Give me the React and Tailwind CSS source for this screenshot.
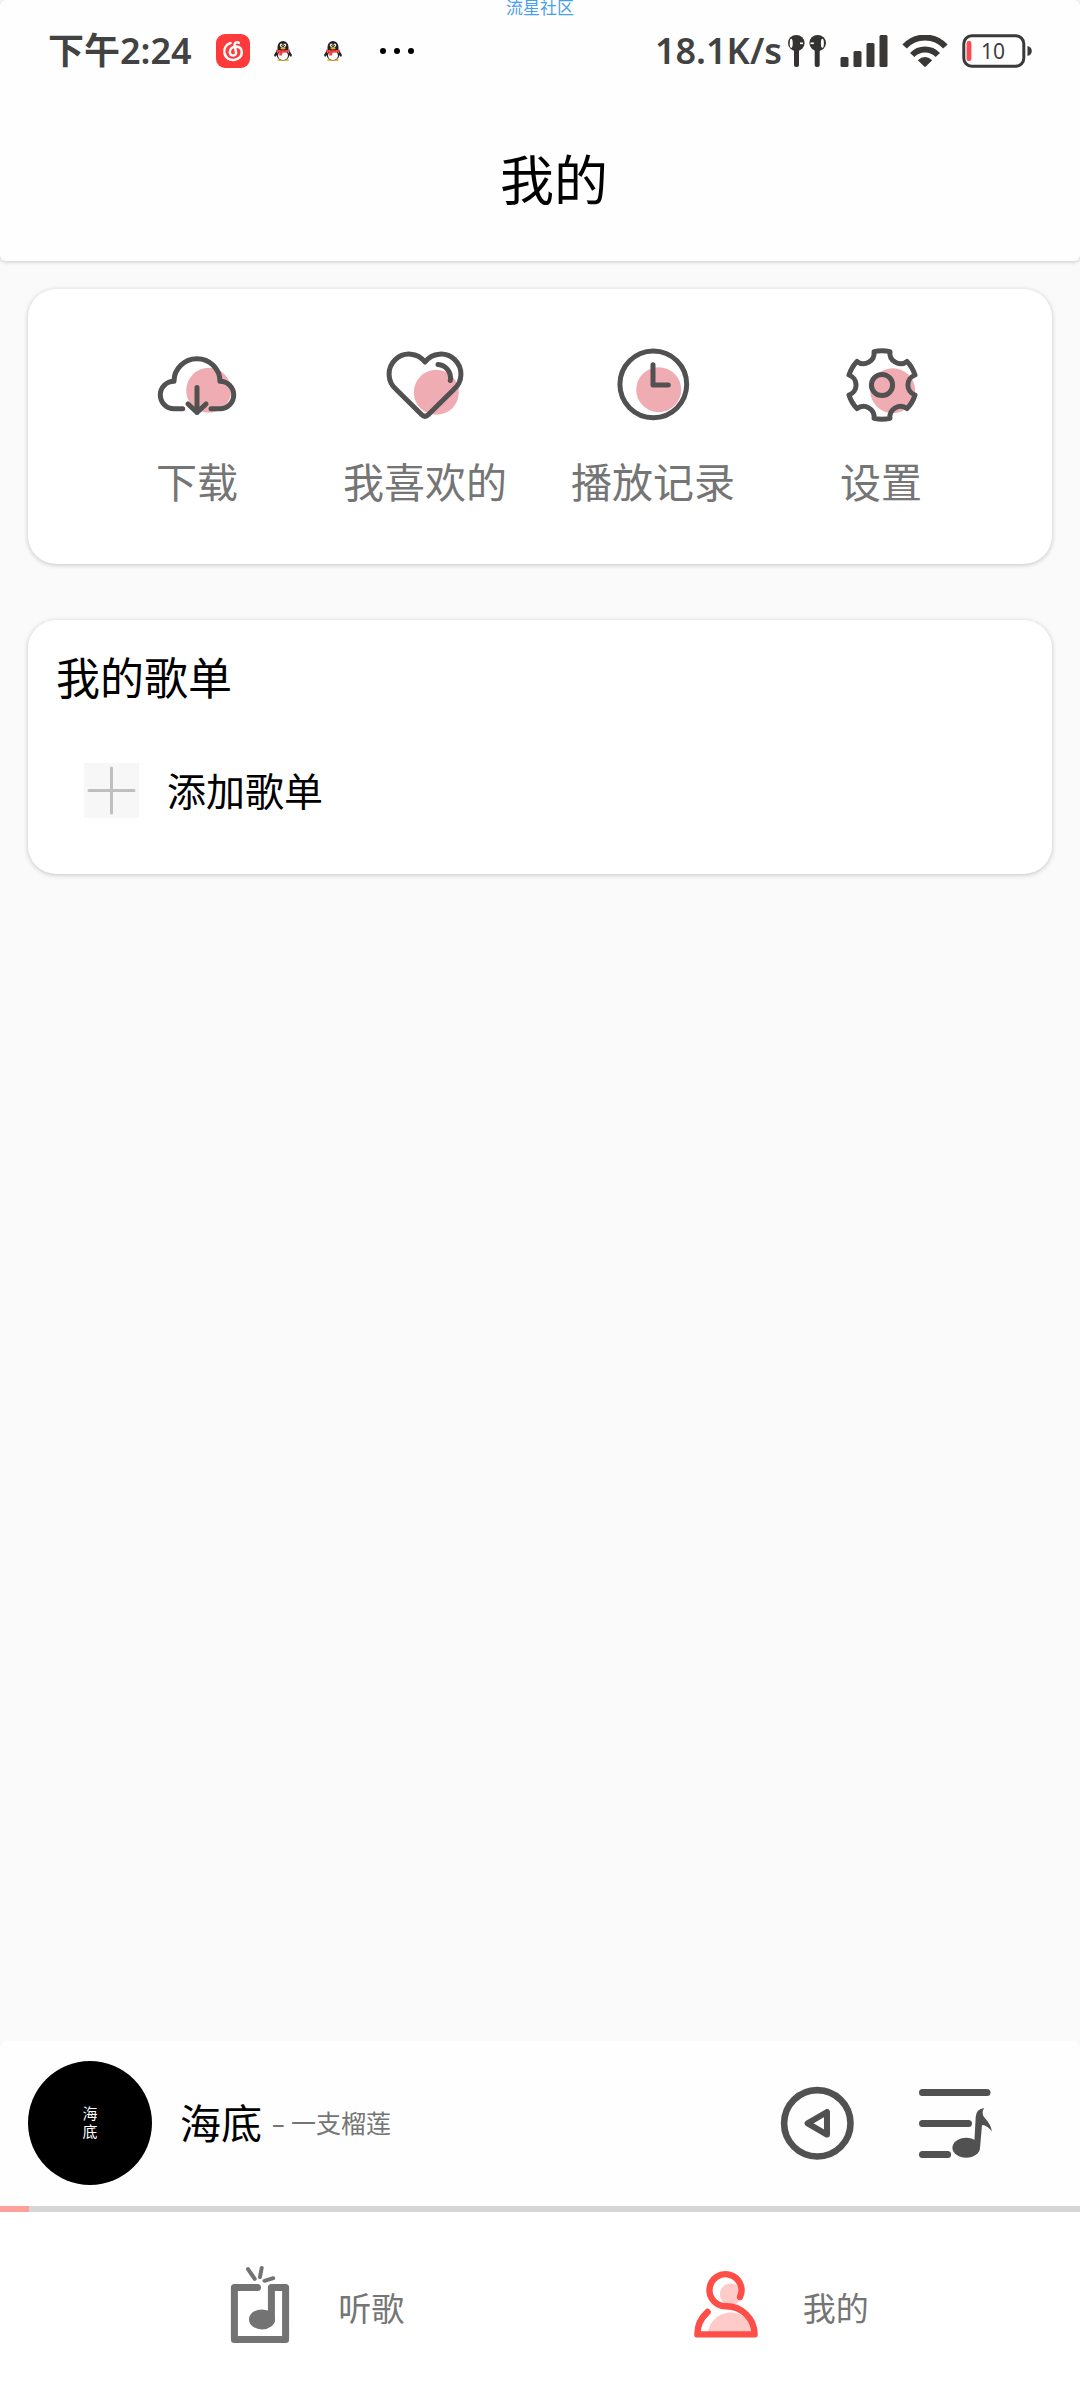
const INK = "#515151";
const PINK = "#f0acb3";

/* ---------- Status bar icons ---------- */

const CloudMusicIcon = () => (
  <svg width="34" height="34" viewBox="0 0 34 34" fill="none" aria-hidden="true">
    <rect width="34" height="34" rx="9" fill="#ff3a3a" />
    <path
      d="M14.5 9 C9.5 10.5 8 15 8.4 18.5 C9.2 24 13.8 26.4 17.8 26 C22.8 25.6 25.8 22 25.8 18.5 C25.8 15 23.5 12.8 20 12.6 C16.5 12.6 13.8 15 13.8 18 C13.8 20.3 15.3 21.7 17.2 21.6 C19.2 21.5 20.4 20 20 18 L18.6 11.5 C18.2 8.6 20.5 7.4 22.8 8.8"
      stroke="#fff"
      strokeWidth="2.5"
      strokeLinecap="round"
    />
  </svg>
);

const PenguinIcon = () => (
  <svg width="18" height="20" viewBox="0 0 18 20" aria-hidden="true">
    <ellipse cx="6" cy="19" rx="3" ry="1" fill="#f5b21a" />
    <ellipse cx="12" cy="19" rx="3" ry="1" fill="#f5b21a" />
    <path d="M3 9 L0 14 L1 16 L3 14 Z M15 9 L18 14 L17 16 L15 14 Z" fill="#222" />
    <ellipse cx="9" cy="14" rx="6.3" ry="5.4" fill="#222" />
    <ellipse cx="9" cy="14.4" rx="5" ry="4.6" fill="#fff" />
    <path d="M3.5 9 V6 A5.5 6 0 0 1 14.5 6 V9 Z" fill="#222" />
    <ellipse cx="7.2" cy="4.2" rx="1.3" ry="1.8" fill="#fff" />
    <ellipse cx="10.8" cy="4.2" rx="1.3" ry="1.8" fill="#fff" />
    <circle cx="7.6" cy="4.4" r="0.6" fill="#222" />
    <circle cx="10.4" cy="4.4" r="0.6" fill="#222" />
    <ellipse cx="9" cy="7.2" rx="2.6" ry="1.3" fill="#f5a11a" />
    <path d="M2.5 8.5 Q9 10.5 15.5 8.5 L16 10.5 Q12 12 8.5 11.8 L8 14.5 H5.2 V11.5 L2 10.5 Z" fill="#fb3c40" />
  </svg>
);

const EarbudsIcon = () => (
  <svg width="38" height="32" viewBox="0 0 38 32" aria-hidden="true">
    <g fill="#333230">
      <ellipse cx="8.3" cy="8" rx="8.3" ry="8" />
      <rect x="6" y="8" width="5" height="24" rx="2" />
      <ellipse cx="29.7" cy="8" rx="8.3" ry="8" />
      <rect x="26.7" y="8" width="5" height="24" rx="2" />
    </g>
    <g fill="#fff">
      <ellipse cx="3.2" cy="8.3" rx="1.5" ry="4.6" />
      <rect x="12" y="7.5" width="3" height="1.6" />
      <ellipse cx="34.4" cy="8.3" rx="1.5" ry="4.6" />
      <rect x="22.5" y="7.5" width="3.4" height="1.6" />
    </g>
  </svg>
);

const SignalIcon = () => (
  <svg width="48" height="32" viewBox="0 0 48 32" fill="#3a3836" aria-hidden="true">
    <rect x="0.5" y="22" width="8" height="10" rx="1.5" />
    <rect x="13.5" y="16" width="8" height="16" rx="1.5" />
    <rect x="26.5" y="8" width="8" height="24" rx="1.5" />
    <rect x="39.5" y="0" width="8" height="32" rx="1.5" />
  </svg>
);

const WifiIcon = () => (
  <svg width="46" height="32" viewBox="0 0 46 32" aria-hidden="true">
    <g fill="none" stroke="#3a3836" strokeWidth="6">
      <path d="M2.6 11.6 A27.5 27.5 0 0 1 43.4 11.6" />
      <path d="M10.2 20 A17.6 17.6 0 0 1 35.8 20" />
    </g>
    <path d="M15.8 25.2 Q23 19 30.2 25.2 L23.8 31.6 Q23 32.4 22.2 31.6 Z" fill="#3a3836" />
  </svg>
);

const BatteryIcon = () => (
  <svg width="70" height="34" viewBox="0 0 70 34" role="img" aria-label="10%">
    <rect x="1.8" y="1.8" width="60" height="30.4" rx="8" fill="none" stroke="#3a3a3a" strokeWidth="3" />
    <rect x="4.6" y="7" width="4.8" height="20" rx="2" fill="#fb4a50" />
    <path d="M65.5 12 Q69.8 13 69.8 17 Q69.8 21 65.5 22 Z" fill="#3a3a3a" />
    <text x="31" y="25" textAnchor="middle" fontSize="21" fill="#3f3f3f" className="font-['Noto_Sans',sans-serif] font-normal">
      10
    </text>
  </svg>
);

/* ---------- Shortcut icons ---------- */

const ShortcutIcon = ({ dotX, dotY, children }) => (
  <svg
    width="80"
    height="80"
    viewBox="0 0 80 80"
    fill="none"
    stroke={INK}
    strokeWidth="5"
    strokeLinecap="round"
    strokeLinejoin="round"
    aria-hidden="true"
  >
    <circle cx={dotX} cy={dotY} r="22.5" fill={PINK} stroke="none" />
    {children}
  </svg>
);

const DownloadIcon = () => (
  <ShortcutIcon dotX={51.7} dotY={46.3}>
    <path d="M25.7 64.7 H17 A13.7 13.7 0 0 1 17 37.3 A23 22.5 0 0 1 63 37.3 A13.7 13.7 0 0 1 63 64.7 H54" />
    <path d="M40 43.5 V68.5 M31 60 L40 68.5 L49 60" />
  </ShortcutIcon>
);

const HeartIcon = () => (
  <ShortcutIcon dotX={51.3} dotY={48.3}>
    <path d="M40 18 A20 20 0 1 0 11.2 45.4 L36.5 70.5 Q40 74 43.5 70.5 L68.8 45.4 A20 20 0 1 0 40 18 Z" />
    <path d="M53 20.5 A13.5 13.5 0 0 1 65.3 36.5" />
  </ShortcutIcon>
);

const HistoryIcon = () => (
  <ShortcutIcon dotX={45.7} dotY={45.7}>
    <circle cx="40.3" cy="40.3" r="33.4" />
    <path d="M40 20.7 V41 H55.3" />
  </ShortcutIcon>
);

const SettingsIcon = () => (
  <ShortcutIcon dotX={51.7} dotY={46.7}>
    <path d="M33 7.6 Q41 6 49 7.6 A10.6 10.6 0 0 0 66 17.4 Q71.5 23 74 31 A10.6 10.6 0 0 0 74 51 Q71.5 59 66 64.6 A10.6 10.6 0 0 0 49 74.4 Q41 76 33 74.4 A10.6 10.6 0 0 0 16 64.6 Q10.5 59 8 51 A10.6 10.6 0 0 0 8 31 Q10.5 23 16 17.4 A10.6 10.6 0 0 0 33 7.6 Z" />
    <circle cx="41" cy="41" r="10.6" />
  </ShortcutIcon>
);

/* ---------- Player icons ---------- */

const PlayIcon = () => (
  <svg width="80" height="80" viewBox="0 0 80 80" fill="none" stroke={INK} aria-hidden="true">
    <circle cx="40.3" cy="40.3" r="33.2" strokeWidth="6.6" />
    <path d="M30.6 40.3 L50 29 V51.6 Z" strokeWidth="6" strokeLinejoin="round" />
  </svg>
);

const QueueIcon = () => (
  <svg width="80" height="80" viewBox="0 0 80 80" fill={INK} aria-hidden="true">
    <path d="M7.5 9.4 H72 M7.5 40.4 H53.5 M7.5 71.4 H32.6" stroke={INK} strokeWidth="7" strokeLinecap="round" />
    <ellipse cx="51.2" cy="64.7" rx="13.8" ry="10" />
    <path d="M60.7 34 Q61 26 69.3 25 Q66 29 69 34 Q76.5 42 76.8 48.6 Q73 42.5 67 42 L65 65 H59 Z" />
  </svg>
);

/* ---------- Tab icons ---------- */

const ListenIcon = () => (
  <svg width="70" height="90" viewBox="-4 0 70 90" fill="none" stroke="#737373" strokeLinecap="round" strokeLinejoin="round" aria-hidden="true">
    <path d="M27.5 23.4 H4.4 V75.4 H55.6 V23.4 H41.4 V56" strokeWidth="7" />
    <ellipse cx="32" cy="55.4" rx="13" ry="10" fill="#737373" stroke="none" />
    <path d="M18 5.2 L24.7 14.8 M31.7 4 L30 13 M34.5 16.8 L43.2 14.2" strokeWidth="4" />
  </svg>
);

const MineIcon = () => (
  <svg width="70" height="90" viewBox="0 0 70 90" fill="none" aria-hidden="true">
    <circle cx="39.7" cy="30.3" r="10.8" fill="#ffcbc9" />
    <path d="M16.5 70 C18 57 28 48.4 40 48.4 C52 48.4 60 57 62 70 Z" fill="#ffcbc9" />
    <path
      d="M49 33 A16 16 0 1 0 35.3 42.2 A28.3 28.3 0 0 1 63.6 70.4 H6.4 Q6.4 57 16.6 48"
      stroke="#ff4d47"
      strokeWidth="6.4"
      strokeLinecap="round"
      strokeLinejoin="round"
    />
  </svg>
);

const shortcuts = [
  { label: "下载", icon: <DownloadIcon /> },
  { label: "我喜欢的", icon: <HeartIcon /> },
  { label: "播放记录", icon: <HistoryIcon /> },
  { label: "设置", icon: <SettingsIcon /> },
];

const tabs = [
  { label: "听歌", href: "#listen", icon: <ListenIcon /> },
  { label: "我的", href: "#mine", icon: <MineIcon />, current: true },
];

const StatusBar = () => (
  <div className="flex items-center justify-between px-12 pt-[34px] text-[36px] leading-[34px] font-semibold text-[#424242]">
    <div className="flex items-center">
      <span>下午2:24</span>
      <span className="ml-6">
        <CloudMusicIcon />
      </span>
      <span className="ml-6 flex gap-8">
        <PenguinIcon />
        <PenguinIcon />
      </span>
      <span className="ml-[38px] flex gap-2">
        <span className="size-[6px] rounded-full bg-black" />
        <span className="size-[6px] rounded-full bg-black" />
        <span className="size-[6px] rounded-full bg-black" />
      </span>
    </div>
    <div className="flex items-center">
      <span>18.1K/s</span>
      <span className="ml-[6px] flex items-center gap-[14px]">
        <EarbudsIcon />
        <SignalIcon />
        <WifiIcon />
        <BatteryIcon />
      </span>
    </div>
  </div>
);

const PlayerBar = ({ progress }) => (
  <section className="rounded-t-lg bg-[#fefefe]">
    <div className="flex items-center pt-5 pr-[85px] pb-[21px] pl-7">
      <div className="flex size-[124px] flex-col items-center justify-center rounded-full bg-black font-['Liberation_Serif','Noto_Sans_CJK_SC',serif] text-[15px] leading-[18px] text-white">
        <span>海</span>
        <span>底</span>
      </div>
      <p className="ml-7 flex flex-1 items-center text-[41px] leading-[60px] text-black">
        海底
        <span className="ml-[10px] text-[25px] text-[#757575]">– 一支榴莲</span>
      </p>
      <div className="flex gap-[58px]">
        <button type="button" aria-label="播放">
          <PlayIcon />
        </button>
        <button type="button" aria-label="播放列表">
          <QueueIcon />
        </button>
      </div>
    </div>
    <div
      role="progressbar"
      aria-label="播放进度"
      aria-valuenow={progress}
      aria-valuemin={0}
      aria-valuemax={100}
      className="h-[6px] bg-[#d6d6d6]"
    >
      <div className="h-full bg-[#ffa19b]" style={{ width: `${progress}%` }} />
    </div>
  </section>
);

const App = () => {
  return (
    <div className="relative flex min-h-screen flex-col bg-[#fafafa] font-['Noto_Sans','Noto_Sans_CJK_SC',sans-serif]">
      <span className="absolute inset-x-0 top-0 text-center text-[17px] leading-4 text-[#4a9fec]">流星社区</span>

      {/* Header */}
      <header className="rounded-md bg-[#fefefe] pb-[41px] shadow-[0_1px_4px_rgba(0,0,0,0.2)]">
        <StatusBar />
        <h1 className="mt-[72px] pl-7 text-center text-[54px] leading-[80px] text-black">我的</h1>
      </header>

      <main className="flex flex-1 flex-col gap-14 px-7 py-7">
        {/* Shortcuts */}
        <section className="grid grid-cols-4 rounded-[28px] bg-white pt-[55px] pr-[57px] pb-[51px] pl-[55px] shadow-[0_1px_5px_rgba(0,0,0,0.22)]">
          {shortcuts.map((item) => (
            <button key={item.label} type="button" className="flex flex-col items-center gap-7">
              {item.icon}
              <span className="text-[41px] leading-[61px] whitespace-nowrap text-[#757575]">{item.label}</span>
            </button>
          ))}
        </section>

        {/* Playlists */}
        <section className="rounded-[28px] bg-white px-7 pt-7 pb-14 shadow-[0_1px_5px_rgba(0,0,0,0.22)]">
          <h2 className="text-[44px] leading-[60px] text-black">我的歌单</h2>
          <button type="button" className="mt-[55px] ml-7 flex items-center gap-7">
            <span className="flex size-[55px] items-center justify-center bg-[#f7f7f7]">
              <svg width="49" height="49" viewBox="0 0 49 49" stroke="#bfbfbf" strokeWidth="3" strokeLinecap="round" aria-hidden="true">
                <path d="M24.5 2 V47 M2 24.5 H47" />
              </svg>
            </span>
            <span className="text-[39px] leading-[55px] text-black">添加歌单</span>
          </button>
        </section>
      </main>

      <PlayerBar progress={2.7} />

      {/* Bottom tabs */}
      <nav className="grid grid-cols-2 bg-white pt-[52px] pr-[68px] pb-[46px] pl-[83px]">
        {tabs.map((tab) => (
          <a
            key={tab.label}
            href={tab.href}
            aria-current={tab.current ? "page" : undefined}
            className="flex items-center justify-center gap-[42px]"
          >
            {tab.icon}
            <span className="text-[33px] leading-[50px] text-[#757575]">{tab.label}</span>
          </a>
        ))}
      </nav>
    </div>
  );
};

export default App;
